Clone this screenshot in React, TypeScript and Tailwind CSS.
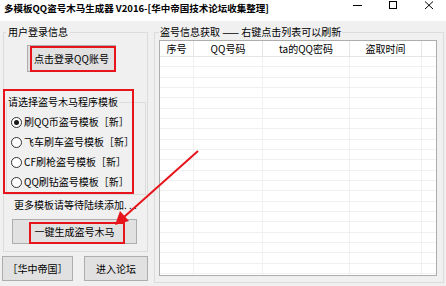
import React from 'react';

const templates = ['刷QQ币盗号模板［新］', '飞车刷车盗号模板［新］', 'CF刷枪盗号模板［新］', 'QQ刷钻盗号模板［新］'];
const columns = [
    { title: '序号', w: 'w-[34px]' },
    { title: 'QQ号码', w: 'w-[69px]' },
    { title: 'ta的QQ密码', w: 'w-[87px]' },
    { title: '盗取时间', w: 'w-[72px]' },
];
const rows = Array.from({ length: 22 });

const Radio = ({ checked, label }: { checked?: boolean; label: string }) => (
    <div className="h-[20px] flex items-center">
        <span className="ml-[4px] w-[11px] h-[11px] rounded-full border border-[#333] bg-white flex items-center justify-center">
            {checked && <span className="w-[5px] h-[5px] rounded-full bg-[#1a1a1a]" />}
        </span>
        <span className="ml-[2px]">{label}</span>
    </div>
);

const WinButton = ({ className, children }: { className: string; children: React.ReactNode }) => (
    <button className={`h-[25px] border border-[#adadad] bg-[#e1e1e1] flex items-center justify-center ${className}`}>
        {children}
    </button>
);

const App = () => {
    return (
        <div className="relative w-[446px] h-[286px] overflow-hidden bg-[#f0f0f0] text-[10px] leading-[12px] text-black font-['Noto_Sans_CJK_SC',sans-serif]">
            {/* title bar */}
            <div className="h-[21px] bg-white flex items-start">
                <div className="ml-[4px] mt-[3px] font-bold text-[9.5px] leading-[11px]">多模板QQ盗号木马生成器 V2016-[华中帝国技术论坛收集整理]</div>
                <svg className="absolute left-0 top-0" width="446" height="14" viewBox="0 0 446 14">
                    <line x1="353" y1="5.5" x2="362" y2="5.5" stroke="#000" strokeWidth="1" />
                    <rect x="389.5" y="1.5" width="7" height="7" fill="none" stroke="#000" strokeWidth="1" />
                    <line x1="425" y1="1.5" x2="433" y2="9" stroke="#000" strokeWidth="1" />
                    <line x1="433" y1="1.5" x2="425" y2="9" stroke="#000" strokeWidth="1" />
                </svg>
            </div>

            <div className="flex pt-[5px]">
                {/* left column */}
                <div className="ml-[3px] w-[145px] flex flex-col">
                    <fieldset className="border border-[#dcdcdc] h-[226px]">
                        <legend className="ml-[2px] px-[2px]">用户登录信息</legend>
                        <WinButton className="mt-[7px] ml-[23px] w-[89px] h-[27px]">点击登录QQ账号</WinButton>
                        <fieldset className="mt-[24px] ml-[2px] w-[140px] border border-[#dcdcdc] pb-[2px]">
                            <legend className="px-[1px]">请选择盗号木马程序模板</legend>
                            <div className="mt-[4px]">
                                {templates.map((t, i) => (
                                    <Radio key={t} label={t} checked={i === 0} />
                                ))}
                            </div>
                        </fieldset>
                        <div className="mt-[4px] ml-[10px]">更多模板请等待陆续添加. . .</div>
                        <WinButton className="mt-[8px] ml-[8px] w-[125px] h-[24px]">一键生成盗号木马</WinButton>
                    </fieldset>
                    <div className="flex mt-[4px] -ml-[1px]">
                        <WinButton className="w-[71px]">［华中帝国］</WinButton>
                        <WinButton className="ml-[11px] w-[64px]">进入论坛</WinButton>
                    </div>
                </div>

                {/* right group */}
                <fieldset className="ml-[6px] w-[290px] h-[257px] border border-[#dcdcdc]">
                    <legend className="ml-[4px] px-[1px]">盗号信息获取 —— 右键点击列表可以刷新</legend>
                    <div className="mt-[2px] ml-[4px] w-[278px] h-[236px] border border-[#adadad] bg-white overflow-hidden">
                        <div className="flex h-[16px] border-b border-[#e5e5e5]">
                            {columns.map(c => (
                                <div key={c.title} className={`${c.w} border-r border-[#e5e5e5] flex items-center justify-center`}>{c.title}</div>
                            ))}
                            <div className="flex-1" />
                        </div>
                        {rows.map((_, i) => (
                            <div key={i} className="flex h-[10.33px] border-b border-[#f0f0f0]">
                                {columns.map(c => (
                                    <div key={c.title} className={`${c.w} border-r border-[#f0f0f0]`} />
                                ))}
                            </div>
                        ))}
                    </div>
                </fieldset>
            </div>

            {/* red annotations */}
            <div className="absolute left-[30px] top-[46px] w-[86px] h-[26px] border-2 border-[#e8141c]" />
            <div className="absolute left-[3px] top-[89px] w-[131px] h-[105px] border-2 border-[#e8141c]" />
            <div className="absolute left-[29px] top-[222px] w-[96px] h-[22px] border-2 border-[#e8141c]" />
            <svg className="absolute left-0 top-0" width="446" height="286" viewBox="0 0 446 286">
                <line x1="198" y1="151" x2="124" y2="217" stroke="#e8141c" strokeWidth="2" />
                <polygon points="115,225 120,211 129,221" fill="#e8141c" />
            </svg>
        </div>
    );
};

export default App;
